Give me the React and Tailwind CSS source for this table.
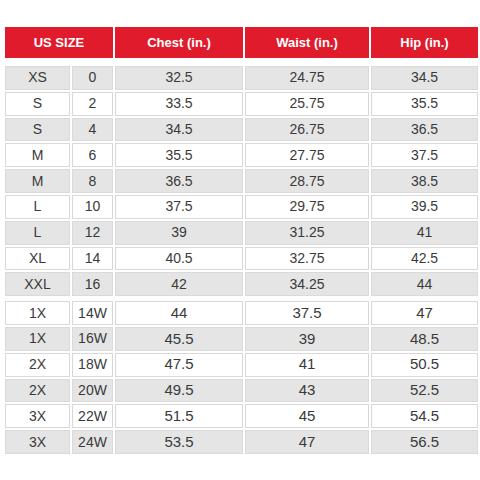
import React from 'react';

const rows = [
    ['XS', '0', '32.5', '24.75', '34.5'],
    ['S', '2', '33.5', '25.75', '35.5'],
    ['S', '4', '34.5', '26.75', '36.5'],
    ['M', '6', '35.5', '27.75', '37.5'],
    ['M', '8', '36.5', '28.75', '38.5'],
    ['L', '10', '37.5', '29.75', '39.5'],
    ['L', '12', '39', '31.25', '41'],
    ['XL', '14', '40.5', '32.75', '42.5'],
    ['XXL', '16', '42', '34.25', '44'],
    ['1X', '14W', '44', '37.5', '47'],
    ['1X', '16W', '45.5', '39', '48.5'],
    ['2X', '18W', '47.5', '41', '50.5'],
    ['2X', '20W', '49.5', '43', '52.5'],
    ['3X', '22W', '51.5', '45', '54.5'],
    ['3X', '24W', '53.5', '47', '56.5'],
];

const widths = ['w-[65px]', 'w-[41px]', 'w-[128px]', 'w-[124px]', 'w-[107px]'];

function Row({ cells, index }) {
    const shaded = index % 2 === 0;
    const big = index >= 9;
    return (
        <div className={`flex gap-[2px] h-[23.8px] ${index === 9 ? 'mt-[3px]' : ''}`}>
            {cells.map((c, i) => (
                <div
                    key={i}
                    className={`${widths[i]} flex items-center justify-center border ${shaded ? 'bg-[#e5e5e5] border-[#dadada]' : 'bg-white border-[#d8d8d8]'} text-[#3a3a3a] ${big && i > 1 ? 'text-[15px]' : 'text-[14px]'}`}
                >
                    {c}
                </div>
            ))}
        </div>
    );
}

export default function App() {
    return (
        <div className="w-[480px] h-[480px] bg-white pt-[27px] pl-[5px]" style={{ fontFamily: '"Liberation Sans", Arial, sans-serif' }}>
            <div className="flex gap-[2px] h-[31px]">
                <div className="w-[108px] bg-[#e01b2c] text-white font-bold text-[13px] flex items-center justify-center">US SIZE</div>
                <div className="w-[128px] bg-[#e01b2c] text-white font-bold text-[13px] flex items-center justify-center">Chest (in.)</div>
                <div className="w-[124px] bg-[#e01b2c] text-white font-bold text-[13px] flex items-center justify-center">Waist (in.)</div>
                <div className="w-[107px] bg-[#e01b2c] text-white font-bold text-[13px] flex items-center justify-center">Hip (in.)</div>
            </div>
            <div className="flex flex-col gap-[2px] mt-[8px]">
                {rows.map((r, i) => (
                    <Row key={i} cells={r} index={i} />
                ))}
            </div>
        </div>
    );
}
